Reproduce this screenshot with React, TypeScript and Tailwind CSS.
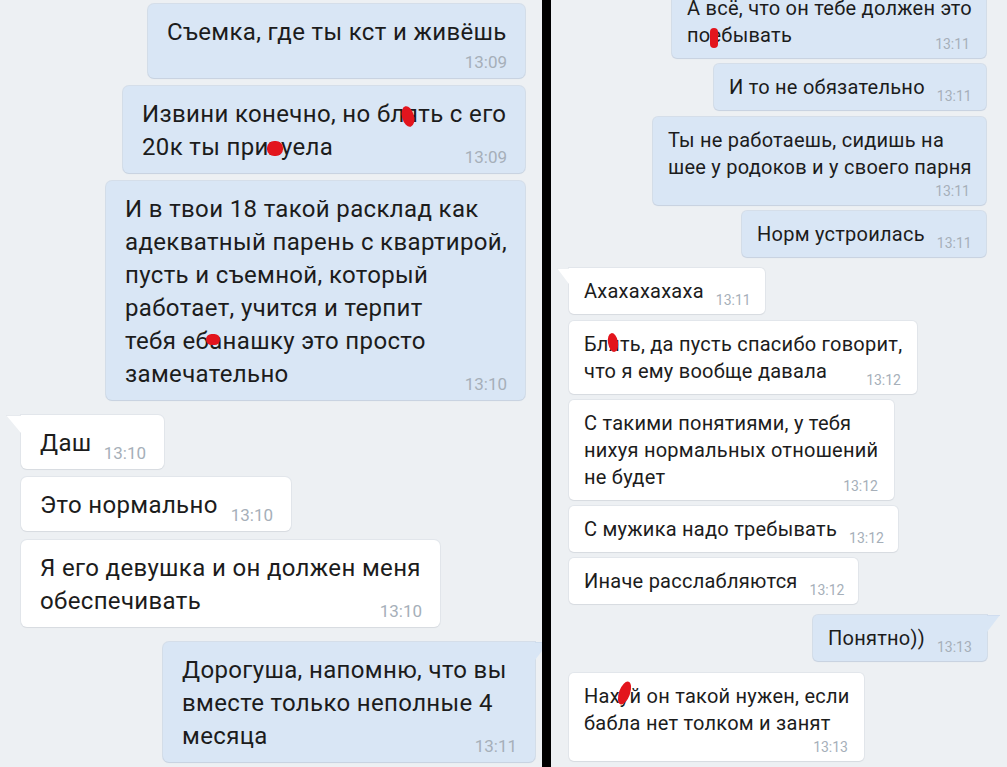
import React from "react";

type Side = "in" | "out";
type Scale = "L" | "R";

function Blob({ ch, cls }: { ch: string; cls: string }) {
  return (
    <span className="relative">
      {ch}
      <span className={"absolute bg-[#e3151d] " + cls} />
    </span>
  );
}

function Tail({ side, scale }: { side: Side; scale: Scale }) {
  if (side === "in") {
    const cls =
      scale === "L"
        ? "absolute left-[-15px] top-0 w-[15px] h-[18px]"
        : "absolute left-[-12px] top-0 w-[12px] h-[16px]";
    return (
      <svg className={cls} viewBox="0 0 14 18" preserveAspectRatio="none">
        <polygon points="0,0 14,0 14,18" fill="#ffffff" />
        <line x1="0" y1="0.5" x2="14" y2="0.5" stroke="#e2e6eb" strokeWidth="0.8" />
      </svg>
    );
  }
  const cls =
    scale === "L"
      ? "absolute right-[-14px] top-0 w-[14px] h-[18px]"
      : "absolute right-[-13px] top-0 w-[13px] h-[17px]";
  return (
    <svg className={cls} viewBox="0 0 14 18" preserveAspectRatio="none">
      <polygon points="0,0 14,0 0,18" fill="#d9e6f5" />
      <line x1="0" y1="0.5" x2="14" y2="0.5" stroke="#ccdaec" strokeWidth="0.8" />
    </svg>
  );
}

function Bubble({
  side,
  scale,
  cls,
  lines,
  time,
  mode,
  tail,
}: {
  side: Side;
  scale: Scale;
  cls: string;
  lines: React.ReactNode[];
  time: string;
  mode: "inline" | "below";
  tail?: boolean;
}) {
  const base =
    side === "out"
      ? "bg-[#d9e6f5] shadow-[0_0_0_1px_rgba(170,190,215,0.35),0_1px_1px_rgba(60,90,130,0.12)]"
      : "bg-white shadow-[0_0_0_1px_rgba(205,212,220,0.35),0_1px_1px_rgba(0,0,0,0.07)]";
  const pad =
    scale === "L"
      ? "pl-[19px] pr-[18px] pt-[12px] pb-[9px] text-[24px] leading-[33px] tracking-[0.35px]"
      : "pl-[15px] pr-[16px] pt-[10px] pb-[9px] text-[20px] leading-[27px] tracking-[0.25px]";
  const radius =
    scale === "L"
      ? tail
        ? side === "in"
          ? "rounded-[6px] rounded-tl-none"
          : "rounded-[6px] rounded-tr-none"
        : "rounded-[6px]"
      : tail
      ? side === "in"
        ? "rounded-[5px] rounded-tl-none"
        : "rounded-[5px] rounded-tr-none"
      : "rounded-[5px]";
  const timeCls =
    scale === "L"
      ? "text-[17px] leading-[20px] tracking-normal -mb-[3px] text-[#a6afb9] shrink-0"
      : "text-[14px] leading-[16px] tracking-normal -mb-[3px] text-[#a6afb9] shrink-0";
  const belowRow = scale === "L" ? "flex justify-end pt-[3px]" : "flex justify-end pt-[2px]";

  const head = lines.slice(0, mode === "inline" ? lines.length - 1 : lines.length);
  const last = lines[lines.length - 1];

  return (
    <div className={"relative text-[#1c1c1c] " + base + " " + pad + " " + radius + " " + cls}>
      {tail && <Tail side={side} scale={scale} />}
      {head.map((l, i) => (
        <div key={i} className="whitespace-nowrap">
          {l}
        </div>
      ))}
      {mode === "inline" ? (
        <div className="flex items-end justify-between gap-[12px]">
          <span className="whitespace-nowrap">{last}</span>
          <span className={timeCls}>{time}</span>
        </div>
      ) : (
        <div className={belowRow}>
          <span className={timeCls}>{time}</span>
        </div>
      )}
    </div>
  );
}

export default function App() {
  return (
    <div className="flex w-[1007px] h-[767px] overflow-hidden font-['Roboto','Noto_Sans',sans-serif] bg-[#edf0f3]">
      {/* LEFT PANEL */}
      <div className="relative w-[542px] shrink-0 h-full overflow-hidden bg-[#edf0f3] flex flex-col pt-[4px]">
        <Bubble
          side="out"
          scale="L"
          cls="self-end mr-[17px] w-[377px]"
          lines={["Съемка, где ты кст и живёшь"]}
          time="13:09"
          mode="below"
        />
        <Bubble
          side="out"
          scale="L"
          cls="self-end mr-[17px] w-[402px] mt-[8px]"
          lines={[
            <>
              Извини конечно, но бл
              <Blob ch="я" cls="left-[-3px] top-[6px] w-[12px] h-[21px] rounded-[50%] rotate-[-15deg]" />
              ть с его
            </>,
            <>
              20к ты при
              <Blob ch="х" cls="left-[-2px] top-[8px] w-[16px] h-[15px] rounded-[45%]" />
              уела
            </>,
          ]}
          time="13:09"
          mode="inline"
        />
        <Bubble
          side="out"
          scale="L"
          cls="self-end mr-[17px] w-[419px] mt-[8px]"
          lines={[
            "И в твои 18 такой расклад как",
            "адекватный парень с квартирой,",
            "пусть и съемной, который",
            "работает, учится и терпит",
            <>
              тебя еб
              <Blob ch="а" cls="left-[-3px] top-[7px] w-[14px] h-[11px] rounded-full" />
              нашку это просто
            </>,
            "замечательно",
          ]}
          time="13:10"
          mode="inline"
        />
        <Bubble
          side="in"
          scale="L"
          cls="self-start ml-[21px] w-[143px] mt-[15px]"
          lines={["Даш"]}
          time="13:10"
          mode="inline"
          tail
        />
        <Bubble
          side="in"
          scale="L"
          cls="self-start ml-[21px] w-[270px] mt-[8px]"
          lines={["Это нормально"]}
          time="13:10"
          mode="inline"
        />
        <Bubble
          side="in"
          scale="L"
          cls="self-start ml-[21px] w-[419px] mt-[9px]"
          lines={["Я его девушка и он должен меня", "обеспечивать"]}
          time="13:10"
          mode="inline"
        />
        <Bubble
          side="out"
          scale="L"
          cls="self-end mr-[7px] w-[372px] mt-[15px]"
          lines={["Дорогуша, напомню, что вы", "вместе только неполные 4", "месяца"]}
          time="13:11"
          mode="inline"
          tail
        />
      </div>

      {/* DIVIDER */}
      <div className="w-[9px] shrink-0 h-full bg-black" />

      {/* RIGHT PANEL */}
      <div className="relative flex-1 h-full overflow-hidden bg-[#edf0f3] flex flex-col">
        <Bubble
          side="out"
          scale="R"
          cls="self-end mr-[21px] w-[314px] mt-[-15px]"
          lines={[
            "А всё, что он тебе должен это",
            <>
              по
              <Blob ch="е" cls="left-[0px] top-[5px] w-[8px] h-[20px] rounded-[4px]" />
              бывать
            </>,
          ]}
          time="13:11"
          mode="inline"
        />
        <Bubble
          side="out"
          scale="R"
          cls="self-end mr-[21px] w-[272px] mt-[6px]"
          lines={["И то не обязательно"]}
          time="13:11"
          mode="inline"
        />
        <Bubble
          side="out"
          scale="R"
          cls="self-end mr-[21px] w-[333px] mt-[7px]"
          lines={["Ты не работаешь, сидишь на", "шее у родоков и у своего парня"]}
          time="13:11"
          mode="below"
        />
        <Bubble
          side="out"
          scale="R"
          cls="self-end mr-[21px] w-[244px] mt-[6px]"
          lines={["Норм устроилась"]}
          time="13:11"
          mode="inline"
        />
        <Bubble
          side="in"
          scale="R"
          cls="self-start ml-[18px] w-[196px] mt-[11px]"
          lines={["Ахахахахаха"]}
          time="13:11"
          mode="inline"
          tail
        />
        <Bubble
          side="in"
          scale="R"
          cls="self-start ml-[18px] w-[348px] mt-[7px]"
          lines={[
            <>
              Бл
              <Blob ch="я" cls="left-[-1px] top-[1px] w-[10px] h-[19px] rounded-[50%] rotate-[-10deg]" />
              ть, да пусть спасибо говорит,
            </>,
            "что я ему вообще давала",
          ]}
          time="13:12"
          mode="inline"
        />
        <Bubble
          side="in"
          scale="R"
          cls="self-start ml-[18px] w-[325px] mt-[6px]"
          lines={["С такими понятиями, у тебя", "нихуя нормальных отношений", "не будет"]}
          time="13:12"
          mode="inline"
        />
        <Bubble
          side="in"
          scale="R"
          cls="self-start ml-[18px] w-[329px] mt-[6px]"
          lines={["С мужика надо требывать"]}
          time="13:12"
          mode="inline"
        />
        <Bubble
          side="in"
          scale="R"
          cls="self-start ml-[18px] w-[289px] mt-[6px]"
          lines={["Иначе расслабляются"]}
          time="13:12"
          mode="inline"
        />
        <Bubble
          side="out"
          scale="R"
          cls="self-end mr-[20px] w-[174px] mt-[11px]"
          lines={["Понятно))"]}
          time="13:13"
          mode="inline"
          tail
        />
        <Bubble
          side="in"
          scale="R"
          cls="self-start ml-[18px] w-[295px] mt-[12px]"
          lines={[
            <>
              Нах
              <Blob ch="у" cls="left-[-1px] top-[-3px] w-[11px] h-[24px] rounded-[50%] rotate-[20deg]" />
              й он такой нужен, если
            </>,
            "бабла нет толком и занят",
          ]}
          time="13:13"
          mode="below"
        />
      </div>
    </div>
  );
}
